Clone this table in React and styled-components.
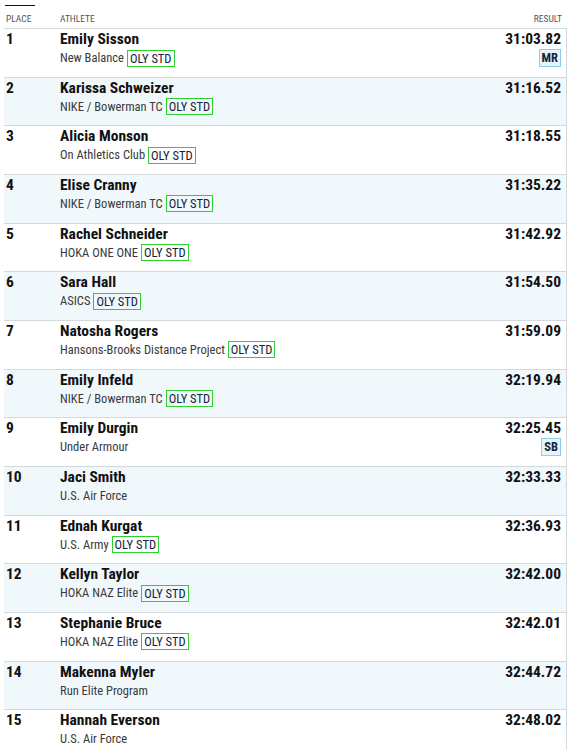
import React from 'react'
import styled, { createGlobalStyle } from 'styled-components'

const GlobalStyle = createGlobalStyle`
  body {
    margin: 0;
    background: #fff;
    font-family: Roboto, "Liberation Sans", sans-serif;
    font-stretch: condensed;
    color: #111;
  }
`

const results = [
  { place: 1, name: 'Emily Sisson', team: 'New Balance', oly: true, time: '31:03.82', mark: 'MR' },
  { place: 2, name: 'Karissa Schweizer', team: 'NIKE / Bowerman TC', oly: true, time: '31:16.52' },
  { place: 3, name: 'Alicia Monson', team: 'On Athletics Club', oly: true, time: '31:18.55' },
  { place: 4, name: 'Elise Cranny', team: 'NIKE / Bowerman TC', oly: true, time: '31:35.22' },
  { place: 5, name: 'Rachel Schneider', team: 'HOKA ONE ONE', oly: true, time: '31:42.92' },
  { place: 6, name: 'Sara Hall', team: 'ASICS', oly: true, time: '31:54.50' },
  { place: 7, name: 'Natosha Rogers', team: 'Hansons-Brooks Distance Project', oly: true, time: '31:59.09' },
  { place: 8, name: 'Emily Infeld', team: 'NIKE / Bowerman TC', oly: true, time: '32:19.94' },
  { place: 9, name: 'Emily Durgin', team: 'Under Armour', time: '32:25.45', mark: 'SB' },
  { place: 10, name: 'Jaci Smith', team: 'U.S. Air Force', time: '32:33.33' },
  { place: 11, name: 'Ednah Kurgat', team: 'U.S. Army', oly: true, time: '32:36.93' },
  { place: 12, name: 'Kellyn Taylor', team: 'HOKA NAZ Elite', oly: true, time: '32:42.00' },
  { place: 13, name: 'Stephanie Bruce', team: 'HOKA NAZ Elite', oly: true, time: '32:42.01' },
  { place: 14, name: 'Makenna Myler', team: 'Run Elite Program', time: '32:44.72' },
  { place: 15, name: 'Hannah Everson', team: 'U.S. Air Force', time: '32:48.02' },
]

const Table = styled.div`
  margin: 0 11px 0 4px;
`

const Header = styled.div`
  position: relative;
  display: grid;
  grid-template-columns: 54px 1fr auto;
  align-items: end;
  box-sizing: border-box;
  height: 28px;
  padding: 0 5px 4px 2px;
  font-size: 9.5px;
  line-height: 11px;
  text-transform: uppercase;
  color: #555;
`

const HeadCell = styled.div`
  text-align: ${p => (p.right ? 'right' : 'left')};
`

const TabLine = styled.span`
  position: absolute;
  left: 1px;
  top: 5px;
  width: 30px;
  height: 1px;
  background: #111;
`

const Body = styled.div`
  border-right: 1px solid #d4d9de;
`

const Row = styled.div`
  display: grid;
  grid-template-columns: 54px 1fr auto;
  box-sizing: border-box;
  height: 48.67px;
  padding: 0 5px 0 2px;
  border-top: 1px solid #d4d9de;
  background: ${p => (p.shaded ? '#f1f8fc' : '#fff')};
`

const Place = styled.div`
  font-size: 15.5px;
  font-weight: 700;
  line-height: 20px;
`

const Athlete = styled.div`
  display: flex;
  flex-direction: column;
`

const Name = styled.div`
  font-size: 15.5px;
  font-weight: 700;
  line-height: 20px;
`

const Team = styled.div`
  display: flex;
  align-items: center;
  gap: 3px;
  font-size: 12.5px;
  color: #3a3a3a;
  line-height: 18px;
`

const Std = styled.span`
  border: 1px solid #2fcf2f;
  color: #14233a;
  padding: 0 2px;
  line-height: 15px;
  font-size: 12.5px;
`

const Result = styled.div`
  display: flex;
  flex-direction: column;
  align-items: flex-end;
`

const Time = styled.div`
  font-size: 15.5px;
  font-weight: 700;
  line-height: 20px;
`

const Mark = styled.span`
  margin-top: 0;
  background: #e6f4fc;
  border: 1px solid #8fcbea;
  color: #14233a;
  font-size: 12.5px;
  font-weight: 700;
  line-height: 16px;
  padding: 0 2px;
`

export default function App() {
  return (
    <>
      <GlobalStyle />
      <Table>
        <Header>
          <TabLine />
          <HeadCell>Place</HeadCell>
          <HeadCell>Athlete</HeadCell>
          <HeadCell right>Result</HeadCell>
        </Header>
        <Body>
          {results.map((r, i) => (
            <Row key={r.place} shaded={i % 2 === 1}>
              <Place>{r.place}</Place>
              <Athlete>
                <Name>{r.name}</Name>
                <Team>
                  {r.team}
                  {r.oly && <Std>OLY STD</Std>}
                </Team>
              </Athlete>
              <Result>
                <Time>{r.time}</Time>
                {r.mark && <Mark>{r.mark}</Mark>}
              </Result>
            </Row>
          ))}
        </Body>
      </Table>
    </>
  )
}
